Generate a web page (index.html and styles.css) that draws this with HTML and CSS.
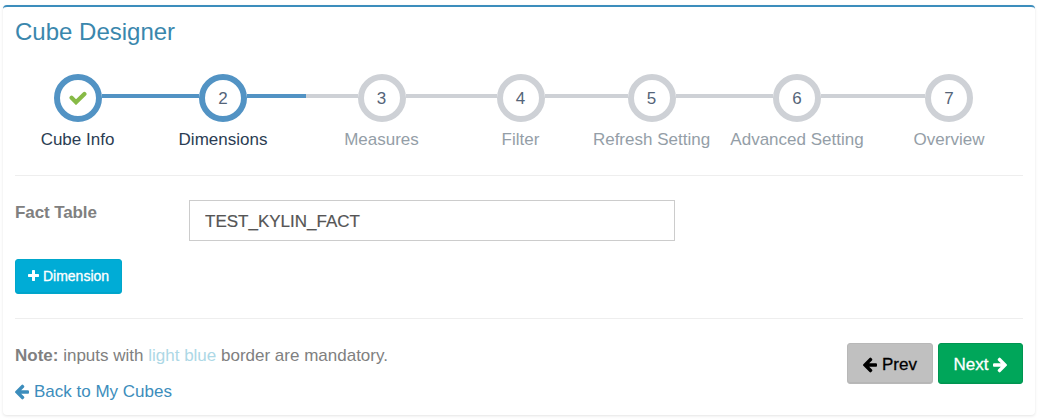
FILE: index.html
```html
<!DOCTYPE html>
<html lang="en">
<head>
<meta charset="utf-8">
<title>Cube Designer</title>
<link rel="stylesheet" href="styles.css">
</head>
<body>
<svg class="symbols" aria-hidden="true">
  <symbol id="arrow-right" viewBox="128 128 1472 1664"><path d="M1600 960q0 54-37 91l-651 651q-39 37-91 37-51 0-90-37l-75-75q-38-38-38-91t38-91l293-293h-704q-52 0-84.5-37.5t-32.5-90.5v-128q0-53 32.5-90.5t84.5-37.5h704l-293-294q-38-36-38-90t38-90l75-75q38-38 90-38 53 0 91 38l651 651q37 35 37 90z"/></symbol>
  <symbol id="plus" viewBox="192 128 1408 1408"><path d="M1600 736v192q0 40-28 68t-68 28h-416v416q0 40-28 68t-68 28h-192q-40 0-68-28t-28-68v-416h-416q-40 0-68-28t-28-68v-192q0-40 28-68t68-28h416v-416q0-40 28-68t68-28h192q40 0 68 28t28 68v416h416q40 0 68 28t28 68z"/></symbol>
</svg>
<main class="card">
  <h1 class="title">Cube Designer</h1>
  <ol class="steps">
    <li class="step done"><div class="track"><span class="marker"><svg class="check" viewBox="0 0 18 14"><path d="M2.6 6.8 7 11.2 15.4 2.9"/></svg></span></div><span class="label">Cube Info</span></li>
    <li class="step active"><div class="track"><span class="marker">2</span></div><span class="label">Dimensions</span></li>
    <li class="step"><div class="track"><span class="marker">3</span></div><span class="label">Measures</span></li>
    <li class="step"><div class="track"><span class="marker">4</span></div><span class="label">Filter</span></li>
    <li class="step"><div class="track"><span class="marker">5</span></div><span class="label">Refresh Setting</span></li>
    <li class="step"><div class="track"><span class="marker">6</span></div><span class="label">Advanced Setting</span></li>
    <li class="step"><div class="track"><span class="marker">7</span></div><span class="label">Overview</span></li>
  </ol>
  <section class="form">
    <div class="field">
      <label class="field-label" for="fact">Fact Table</label>
      <input class="input" id="fact" type="text" value="TEST_KYLIN_FACT" readonly>
    </div>
    <button class="btn add"><svg class="icon-plus"><use href="#plus"/></svg>Dimension</button>
  </section>
  <footer class="footer">
    <div class="notes">
      <p class="note"><b>Note:</b> inputs with <span class="hint">light blue</span> border are mandatory.</p>
      <a class="back"><svg class="icon flip"><use href="#arrow-right"/></svg>Back to My Cubes</a>
    </div>
    <div class="actions">
      <button class="btn prev"><svg class="icon flip"><use href="#arrow-right"/></svg>Prev</button>
      <button class="btn next">Next<svg class="icon"><use href="#arrow-right"/></svg></button>
    </div>
  </footer>
</main>
</body>
</html>
```
FILE: styles.css
```css
* { box-sizing: border-box; }
body {
  margin: 0;
  padding: 5px 8px 5px 3px;
  background: #fff;
  color: #808080;
  font: 17px/24px "Liberation Sans", Arial, sans-serif;
}
.symbols { display: none; }
.card {
  height: 410px;
  padding: 0 12px;
  border-top: 2px solid #3c8dbc;
  border-radius: 4px;
  background: #fff;
  box-shadow: 0 1px 3px rgba(0, 0, 0, .11);
}
.title {
  margin: 0;
  padding-top: 11px;
  color: #3a87ad;
  font-size: 24px;
  font-weight: 400;
  line-height: 28px;
}
.steps {
  display: grid;
  grid-template-columns: 125px 166px 151px 127px 135px 156px 148px;
  height: 130px;
  margin: 0;
  padding: 28px 0 0;
  border-bottom: 1px solid #eee;
  list-style: none;
}
.step { --line: #ced1d6; color: #949ea7; text-align: center; }
.step.done, .step.active { --line: #5293c4; color: #2b3d53; }
.track { display: flex; }
.track::before, .track::after {
  content: "";
  flex: 1;
  height: 4px;
  margin-top: 20px;
  background: var(--line);
}
.step:first-child .track::before, .step:last-child .track::after { background: none; }
.marker {
  display: flex;
  align-items: center;
  justify-content: center;
  width: 48px;
  height: 48px;
  padding-top: 2px;
  border: 6px solid var(--line);
  border-radius: 50%;
  color: #546478;
}
.done .marker { padding-top: 0; }
.check { width: 18px; height: 14px; fill: none; stroke: #87ba46; stroke-width: 4.2; stroke-linecap: round; }
.label { display: block; margin-top: 6px; white-space: nowrap; }
.form { height: 143px; padding-top: 24px; border-bottom: 1px solid #eee; }
.field { display: flex; }
.field-label { width: 174px; padding-top: 1px; font-weight: 700; letter-spacing: -.1px; }
.input {
  width: 486px;
  height: 41px;
  padding: 2px 15px 0;
  border: 1px solid #ccc;
  background: #fff;
  color: #555;
  font: inherit;
  -webkit-text-stroke: .2px currentColor;
  outline: 0;
}
.btn {
  display: flex;
  align-items: center;
  justify-content: center;
  gap: 5px;
  height: 41px;
  padding: 0;
  border: 1px solid;
  border-radius: 3px;
  box-shadow: inset 0 -1px 0 rgba(0, 0, 0, .05);
  font: inherit;
  -webkit-text-stroke: .3px currentColor;
}
.add { width: 107px; height: 35px; margin-top: 18px; padding-bottom: 2px; gap: 4px; border-color: #00a7cb; background: #00acd6; color: #fff; font-size: 14px; }
.icon-plus { width: 11px; height: 11px; fill: currentColor; }
.icon { width: 14px; height: 16px; fill: currentColor; }
.flip { transform: scaleX(-1); }
.footer { display: flex; justify-content: space-between; padding-top: 24px; }
.note { margin: 0; padding-top: 1px; }
.hint { color: #add8e6; }
.back { display: flex; align-items: center; gap: 5px; margin-top: 12px; color: #3c8dbc; }
.actions { display: flex; gap: 5px; }
.prev { width: 86px; border-color: #b8b8b8; background: #c0c0c0; color: #000; }
.next { width: 85px; border-color: #009551; background: #00a65a; color: #fff; }
.next, .prev { padding-top: 2px; }
```
